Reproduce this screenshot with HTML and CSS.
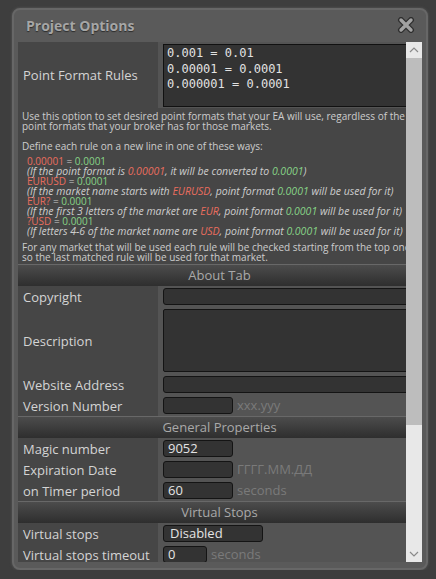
FILE: index.html
```html
<!DOCTYPE html>
<html lang="en">
  <head>
    <meta charset="UTF-8" />
    <meta name="viewport" content="width=device-width, initial-scale=1.0" />
    <title>Project Options</title>
    <link rel="stylesheet" href="styles.css">
  </head>
  <body>
    <div class="dialog">
      <div class="dialog__title">
        <span class="dialog__caption">Project Options</span>
        <svg class="dialog__close" width="18" height="16" viewBox="0 0 18 16">
          <path d="M4 3 L14 13 M14 3 L4 13" stroke="#2e2e2e" stroke-width="6" stroke-linecap="round" fill="none" />
          <path d="M4 3 L14 13 M14 3 L4 13" stroke="#a2a2a2" stroke-width="3.4" stroke-linecap="round" fill="none" />
        </svg>
      </div>
      <div class="dialog__body">
        <div class="form">
          <div class="row row--tall">
            <div class="row__label">Point Format Rules</div>
            <div class="row__value">
              <div class="code-box">0.001 = 0.01<br>0.00001 = 0.0001<br>0.000001 = 0.0001</div>
            </div>
          </div>

          <div class="help">
            <p class="help__para">
              Use this option to set desired point formats that your EA will use, regardless of the<br>
              point formats that your broker has for those markets.
            </p>
            <p class="help__para help__para--define">Define each rule on a new line in one of these ways:</p>
            <div class="help__rules">
              <div><span class="red">0.00001</span> = <span class="green">0.0001</span></div>
              <div class="help__note">(If the point format is <span class="red">0.00001</span>, it will be converted to <span class="green">0.0001</span>)</div>
              <div><span class="red">EURUSD</span> = <span class="green">0.0001</span></div>
              <div class="help__note">(If the market name starts with <span class="red">EURUSD</span>, point format <span class="green">0.0001</span> will be used for it)</div>
              <div><span class="red">EUR?</span> = <span class="green">0.0001</span></div>
              <div class="help__note">(If the first 3 letters of the market are <span class="red">EUR</span>, point format <span class="green">0.0001</span> will be used for it)</div>
              <div><span class="red">?USD</span> = <span class="green">0.0001</span></div>
              <div class="help__note">(If letters 4-6 of the market name are <span class="red">USD</span>, point format <span class="green">0.0001</span> will be used for it)</div>
            </div>
            <p class="help__para">
              For any market that will be used each rule will be checked starting from the top one to the bottom,<br>
              so the last matched rule will be used for that market.
            </p>
          </div>

          <div class="section">About Tab</div>
          <div class="row">
            <div class="row__label">Copyright</div>
            <div class="row__value"><div class="field field--wide"></div></div>
          </div>
          <div class="row row--area">
            <div class="row__label">Description</div>
            <div class="row__value"><div class="field field--area"></div></div>
          </div>
          <div class="row">
            <div class="row__label">Website Address</div>
            <div class="row__value"><div class="field field--wide"></div></div>
          </div>
          <div class="row">
            <div class="row__label">Version Number</div>
            <div class="row__value"><div class="field field--short"></div><span class="hint">xxx.yyy</span></div>
          </div>

          <div class="section">General Properties</div>
          <div class="row">
            <div class="row__label">Magic number</div>
            <div class="row__value"><div class="field field--short">9052</div></div>
          </div>
          <div class="row">
            <div class="row__label">Expiration Date</div>
            <div class="row__value"><div class="field field--short"></div><span class="hint">ГГГГ.ММ.ДД</span></div>
          </div>
          <div class="row">
            <div class="row__label">on Timer period</div>
            <div class="row__value"><div class="field field--short">60</div><span class="hint">seconds</span></div>
          </div>

          <div class="section">Virtual Stops</div>
          <div class="row">
            <div class="row__label">Virtual stops</div>
            <div class="row__value"><div class="field field--select">Disabled</div></div>
          </div>
          <div class="row">
            <div class="row__label">Virtual stops timeout</div>
            <div class="row__value"><div class="field field--tiny">0</div><span class="hint">seconds</span></div>
          </div>
        </div>

        <div class="scrollbar">
          <svg class="scrollbar__arrow" width="16" height="16" viewBox="0 0 16 16">
            <path d="M4 10 L8 6 L12 10" stroke="#8a8a8a" stroke-width="1.2" fill="none" />
          </svg>
          <div class="scrollbar__thumb"></div>
          <div class="scrollbar__track"></div>
          <svg class="scrollbar__arrow" width="16" height="16" viewBox="0 0 16 16">
            <path d="M4 6 L8 10 L12 6" stroke="#8a8a8a" stroke-width="1.2" fill="none" />
          </svg>
        </div>
      </div>
    </div>
  </body>
</html>
```

FILE: styles.css
```css
* {
  box-sizing: border-box;
}

body {
  margin: 0;
  background: #3e3e3e;
  font-family: 'Open Sans', 'Noto Sans', sans-serif;
  color: #d2d2d2;
}

.dialog {
  width: 416px;
  height: 562px;
  margin: 8px 0 0 12px;
  background: #5a5a5a;
  border: 2px solid #676767;
  border-radius: 8px;
  box-shadow: 0 0 2px 1px #4c4c4c;
  padding: 0 4px 6px;
  display: flex;
  flex-direction: column;
}

.dialog__title {
  height: 32px;
  flex-shrink: 0;
  display: flex;
  align-items: center;
  justify-content: space-between;
  padding: 0 7px 2px 8px;
}

.dialog__caption {
  font-size: 14px;
  font-weight: 700;
  color: #a6a6a6;
  text-shadow: 0 1px 1px #2c2c2c;
}

.dialog__close {
  display: block;
}

.dialog__body {
  position: relative;
  flex: 1;
  overflow: hidden;
  background: #555;
}

.form {
  width: 403px;
}

.row {
  display: flex;
  min-height: 21px;
}

.row--tall {
  height: 66px;
}

.row--area {
  height: 67px;
}

.row__label {
  width: 140px;
  flex-shrink: 0;
  background: #464646;
  font-size: 13px;
  color: #d4d4d4;
  padding-left: 5px;
  display: flex;
  align-items: center;
  white-space: nowrap;
}

.row__value {
  flex: 1;
  display: flex;
  align-items: flex-start;
  padding: 2px 0 0 5px;
  background: #545454;
}

.code-box {
  width: 100%;
  height: 63px;
  background: #333;
  border: 1px solid #111;
  font-family: 'DejaVu Sans Mono', monospace;
  font-size: 12px;
  line-height: 15.5px;
  color: #e2e2e2;
  padding: 1px 0 0 3px;
  white-space: nowrap;
}

.field {
  height: 17px;
  background: #333;
  border: 1px solid #141414;
  border-radius: 3px;
  font-size: 13px;
  line-height: 15px;
  color: #e4e4e4;
  padding-left: 4px;
  flex-shrink: 0;
}

.field--wide {
  width: 100%;
}

.field--area {
  width: 100%;
  height: 63px;
  border-radius: 2px;
}

.field--short {
  width: 70px;
}

.field--tiny {
  width: 44px;
}

.field--select {
  width: 100px;
  padding-left: 6px;
}

.hint {
  font-size: 13px;
  line-height: 17px;
  color: #7a7a7a;
  margin-left: 4px;
}

.help {
  background: #464646;
  padding: 3px 0 2px 4px;
  font-size: 10px;
  line-height: 10px;
  white-space: nowrap;
  color: #cdcdcd;
}

.help__para {
  margin: 0;
}

.help__para--define {
  margin: 10px 0 5px;
}

.help__rules {
  padding-left: 5px;
  margin-bottom: 6px;
}

.help__note {
  font-style: italic;
  font-size: 10.5px;
}

.red {
  color: #ea6d5e;
}

.green {
  color: #86d487;
}

.section {
  height: 22px;
  border-top: 1px solid #686868;
  background: linear-gradient(#4c4c4c, #2e2e2e);
  color: #a9a9a9;
  font-size: 13px;
  line-height: 20px;
  text-align: center;
}

.scrollbar {
  position: absolute;
  top: 0;
  right: 0;
  bottom: 0;
  width: 16px;
  background: #e8e8e8;
  display: flex;
  flex-direction: column;
}

.scrollbar__arrow {
  display: block;
  flex-shrink: 0;
}

.scrollbar__thumb {
  height: 367px;
  background: #bdbdbd;
}

.scrollbar__track {
  flex: 1;
}
```
